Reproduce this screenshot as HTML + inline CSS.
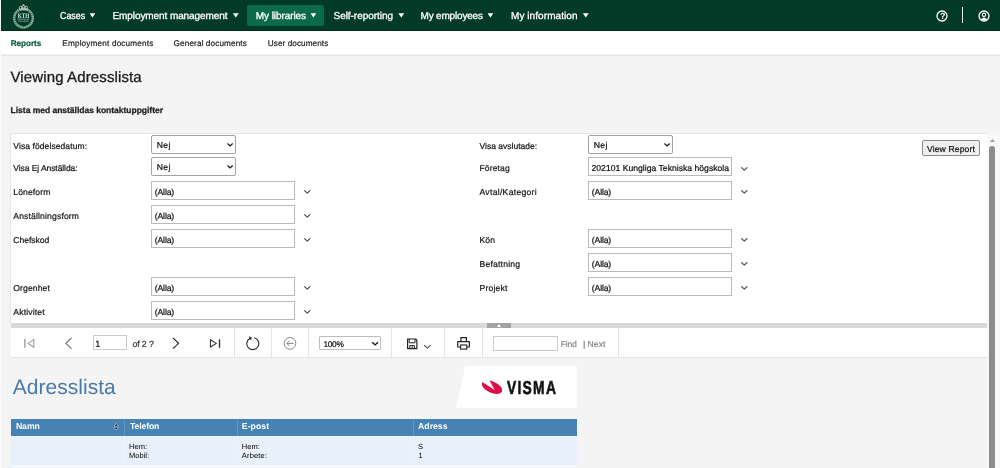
<!DOCTYPE html>
<html><head><meta charset="utf-8"><title>Viewing Adresslista</title>
<style>
*{box-sizing:border-box;margin:0;padding:0}
html,body{width:1000px;height:468px;overflow:hidden;background:#f4f4f4;font-family:"Liberation Sans","DejaVu Sans",sans-serif;color:#222;text-rendering:geometricPrecision}
.a{position:absolute}
.t{position:absolute;white-space:pre}
svg{position:absolute;overflow:visible}
#nav{position:absolute;left:0;top:0;width:1000px;height:31px;background:#013a26;border-bottom:1px solid #002c1c}
.tri{position:absolute;width:5.8px;height:4.4px;background:#fff;clip-path:polygon(0 0,100% 0,50% 100%);top:13.2px}
#sub{position:absolute;left:0;top:31px;width:1000px;height:25px;background:#fff;border-bottom:1px solid #e6e6e6;box-shadow:inset 0 -1px 0 #f0f0f0}
#panel{position:absolute;left:10px;top:133px;width:977px;height:190px;background:#fff;border-top:1px solid #e6e6e6;border-left:1px solid #e6e6e6}
.sel{position:absolute;height:19px;border:1px solid #a2a2a2;border-radius:2px;background:#fff}
.inp{position:absolute;height:19px;border:1px solid #bababa;background:#fff}
.sep{position:absolute;top:328px;width:1px;height:30px;background:#e4e4e4}
.chv{fill:none;stroke:#3a3a3a;stroke-width:1.1}
#txt{position:absolute;left:0;top:0;width:1000px;height:468px;will-change:transform}

</style></head><body>
<div id="nav">
 <div class="a" style="left:0;top:0;width:1px;height:31px;background:#f2f5f3"></div>
 <svg style="left:11px;top:2px;will-change:transform" width="25" height="28" viewBox="11 2 25 28">
  <circle cx="23.5" cy="18.1" r="9.3" fill="none" stroke="#8fb3a2" stroke-width="2.5" stroke-dasharray="1.6 0.45"/>
  <circle cx="23.5" cy="18.1" r="7.4" fill="#013a26"/>
  <circle cx="21" cy="7.9" r="1.7" fill="none" stroke="#a9c6b8" stroke-width="0.9"/>
  <circle cx="26" cy="7.9" r="1.7" fill="none" stroke="#a9c6b8" stroke-width="0.9"/>
  <circle cx="23.5" cy="7.3" r="1.8" fill="none" stroke="#b8d1c5" stroke-width="0.9"/>
  <path d="M23.5 4 V6 M22.7 4.8 H24.3" stroke="#b8d1c5" stroke-width="0.7" fill="none"/>
  <rect x="19.6" y="9.2" width="7.8" height="1.2" fill="#a9c6b8"/>
  <text x="17.4" y="20.2" font-size="1.9" font-family="Liberation Sans,sans-serif" font-weight="700" fill="#a7c4b6" textLength="12" lengthAdjust="spacingAndGlyphs">VETENSKAP</text><text x="18.1" y="22.3" font-size="1.9" font-family="Liberation Sans,sans-serif" font-weight="700" fill="#a7c4b6" textLength="10.6" lengthAdjust="spacingAndGlyphs">OCH KONST</text>
  <text x="23.5" y="17.6" font-size="6.9" font-family="Liberation Serif,serif" font-weight="700" fill="#dcebe3" text-anchor="middle" textLength="11.6" lengthAdjust="spacingAndGlyphs">KTH</text>
 </svg>
 <div class="a" style="left:247px;top:5px;width:77px;height:21px;background:#0a6a4a;border-radius:2px"></div>
 <div class="tri" style="left:89.5px"></div>
 <div class="tri" style="left:232.9px"></div>
 <div class="tri" style="left:310.5px"></div>
 <div class="tri" style="left:398.4px"></div>
 <div class="tri" style="left:487.5px"></div>
 <div class="tri" style="left:582.9px"></div>
 <svg style="left:935.9px;top:9.9px" width="12" height="12" viewBox="0 0 12 12"><circle cx="6" cy="6" r="5" fill="none" stroke="#fff" stroke-width="1.3"/></svg>
 <div class="a" style="left:962.1px;top:7px;width:1.3px;height:16px;background:#e8efec"></div>
 <svg style="left:978.3px;top:9.9px" width="12" height="12" viewBox="0 0 12 12"><circle cx="6" cy="6" r="5" fill="none" stroke="#fff" stroke-width="1.3"/><circle cx="6" cy="4.8" r="1.7" fill="none" stroke="#fff" stroke-width="1.1"/><path d="M2.6 9.4 Q6 5.6 9.4 9.4 Q6 11.6 2.6 9.4 Z" fill="#fff"/></svg>
</div>
<div id="sub"></div>
<div id="panel"></div>
<!-- scrollbar -->
<div class="a" style="left:987px;top:133px;width:13px;height:335px;background:#f8f8f8"></div>
<div class="a" style="left:989.3px;top:146px;width:5.4px;height:330px;background:#8c8c8c;border-radius:3px"></div>
<svg style="left:989.5px;top:138.5px" width="5" height="3" viewBox="0 0 5 3"><path d="M0 3 L2.5 0 L5 3 Z" fill="#a0a0a0"/></svg>
<!-- selects -->
<div class="sel" style="left:151px;top:135px;width:85px"></div>
<div class="sel" style="left:151px;top:157px;width:85px"></div>
<div class="sel" style="left:588px;top:135px;width:85px"></div>
<svg style="left:226.7px;top:143.2px" width="6.2" height="3.6" viewBox="0 0 6.2 3.6"><path d="M0.5 0.5 L3.1 3 L5.7 0.5" fill="none" stroke="#1a1a1a" stroke-width="1.25"/></svg>
<svg style="left:226.7px;top:165.4px" width="6.2" height="3.6" viewBox="0 0 6.2 3.6"><path d="M0.5 0.5 L3.1 3 L5.7 0.5" fill="none" stroke="#1a1a1a" stroke-width="1.25"/></svg>
<svg style="left:663.7px;top:143.2px" width="6.2" height="3.6" viewBox="0 0 6.2 3.6"><path d="M0.5 0.5 L3.1 3 L5.7 0.5" fill="none" stroke="#1a1a1a" stroke-width="1.25"/></svg>
<!-- inputs left -->
<div class="inp" style="left:151px;top:181px;width:144px"></div>
<div class="inp" style="left:151px;top:205px;width:144px"></div>
<div class="inp" style="left:151px;top:229px;width:144px"></div>
<div class="inp" style="left:151px;top:277px;width:144px"></div>
<div class="inp" style="left:151px;top:301px;width:144px"></div>
<!-- inputs right -->
<div class="inp" style="left:588px;top:157px;width:144px"></div>
<div class="inp" style="left:588px;top:181px;width:144px"></div>
<div class="inp" style="left:588px;top:229px;width:144px"></div>
<div class="inp" style="left:588px;top:253px;width:144px"></div>
<div class="inp" style="left:588px;top:277px;width:144px"></div>
<!-- chevrons for inputs -->
<svg class="chv" style="left:304px;top:190px" width="6.6" height="3.6" viewBox="0 0 6.6 3.6"><path d="M0.3 0.3 L3.3 3.1 L6.3 0.3"/></svg>
<svg class="chv" style="left:304px;top:214px" width="6.6" height="3.6" viewBox="0 0 6.6 3.6"><path d="M0.3 0.3 L3.3 3.1 L6.3 0.3"/></svg>
<svg class="chv" style="left:304px;top:238px" width="6.6" height="3.6" viewBox="0 0 6.6 3.6"><path d="M0.3 0.3 L3.3 3.1 L6.3 0.3"/></svg>
<svg class="chv" style="left:304px;top:286px" width="6.6" height="3.6" viewBox="0 0 6.6 3.6"><path d="M0.3 0.3 L3.3 3.1 L6.3 0.3"/></svg>
<svg class="chv" style="left:304px;top:310px" width="6.6" height="3.6" viewBox="0 0 6.6 3.6"><path d="M0.3 0.3 L3.3 3.1 L6.3 0.3"/></svg>
<svg class="chv" style="left:740.6px;top:166.5px" width="6.6" height="3.6" viewBox="0 0 6.6 3.6"><path d="M0.3 0.3 L3.3 3.1 L6.3 0.3"/></svg>
<svg class="chv" style="left:740.6px;top:190px" width="6.6" height="3.6" viewBox="0 0 6.6 3.6"><path d="M0.3 0.3 L3.3 3.1 L6.3 0.3"/></svg>
<svg class="chv" style="left:740.6px;top:238px" width="6.6" height="3.6" viewBox="0 0 6.6 3.6"><path d="M0.3 0.3 L3.3 3.1 L6.3 0.3"/></svg>
<svg class="chv" style="left:740.6px;top:262px" width="6.6" height="3.6" viewBox="0 0 6.6 3.6"><path d="M0.3 0.3 L3.3 3.1 L6.3 0.3"/></svg>
<svg class="chv" style="left:740.6px;top:286px" width="6.6" height="3.6" viewBox="0 0 6.6 3.6"><path d="M0.3 0.3 L3.3 3.1 L6.3 0.3"/></svg>
<!-- view report button -->
<div class="a" style="left:922px;top:140px;width:58px;height:16px;background:#efefef;border:1px solid #8c8c8c;border-radius:2px"></div>
<!-- splitter -->
<div class="a" style="left:10.5px;top:322.5px;width:976.5px;height:5px;background:#d9d9d9"></div>
<div class="a" style="left:487px;top:322.5px;width:23.5px;height:5px;background:#a3a3a3"></div>
<svg style="left:496.5px;top:323.5px" width="4" height="3" viewBox="0 0 4 3"><path d="M0 3 L2 0 L4 3 Z" fill="#fff"/></svg>
<!-- toolbar -->
<div class="a" style="left:10.5px;top:327.5px;width:976.5px;height:30.5px;background:#fff;border-bottom:1px solid #e4e4e4"></div>
<div class="sep" style="left:234px"></div>
<div class="sep" style="left:271.2px"></div>
<div class="sep" style="left:308.2px"></div>
<div class="sep" style="left:391px"></div>
<div class="sep" style="left:444px"></div>
<div class="sep" style="left:482px"></div>
<div class="sep" style="left:618px"></div>
<div class="a" style="left:93px;top:335px;width:34px;height:15px;background:#fff;border:1px solid #cacaca"></div>
<div class="a" style="left:319px;top:336px;width:62px;height:14px;background:#fff;border:1px solid #bdbdbd;border-radius:1px"></div>
<div class="a" style="left:493px;top:336px;width:65px;height:15px;background:#fff;border:1px solid #cacaca"></div>
<svg style="left:0;top:0" width="1000" height="468" viewBox="0 0 1000 468" fill="none" stroke-linecap="butt">
 <!-- first -->
 <path d="M24.9 339 V347.8" stroke="#a0a0a0" stroke-width="1.5"/>
 <path d="M33.8 339.6 L28.2 343.4 L33.8 347.2 Z" stroke="#9a9a9a" stroke-width="1.1"/>
 <!-- prev -->
 <path d="M71.6 337.8 L65.9 343.3 L71.6 348.8" stroke="#6e6e6e" stroke-width="1.1"/>
 <!-- next -->
 <path d="M172.9 337.9 L178.6 343.3 L172.9 348.7" stroke="#222" stroke-width="1.15"/>
 <!-- last -->
 <path d="M210.5 339.8 L216.2 343.4 L210.5 347 Z" stroke="#333" stroke-width="1.1"/>
 <path d="M219.5 339.3 V347.8" stroke="#333" stroke-width="1.4"/>
 <!-- refresh -->
 <path d="M254.15 337.75 A6 6 0 1 1 249.98 338.3" stroke="#222" stroke-width="1.05"/>
 <path d="M251.5 337.5 L249.1 336.7 L250.8 339.9 Z" fill="#222" stroke="#222" stroke-width="0.4"/>
 <!-- back -->
 <circle cx="290" cy="343.4" r="5.8" stroke="#858585" stroke-width="1"/>
 <path d="M286.8 343.4 H293.7 M289.6 340.6 L286.8 343.4 L289.6 346.2" stroke="#858585" stroke-width="1"/>
 <!-- zoom select chevron -->
 <path d="M372.2 342.2 L375.1 344.9 L378 342.2" stroke="#111" stroke-width="1.4"/>
 <!-- save -->
 <path d="M407.6 339 H415.6 L416.9 340.2 V348.6 H407.6 Z" stroke="#222" stroke-width="1.2" stroke-linejoin="round"/>
 <path d="M409.2 339 V342.8 H415 V339" stroke="#222" stroke-width="1"/>
 <path d="M409.8 348.6 V345.6 H414.4 V348.6" stroke="#222" stroke-width="1"/>
 <rect x="411.6" y="346.3" width="1.4" height="2" fill="#555" stroke="none"/>
 <path d="M424.2 345.2 L427.4 348.1 L430.6 345.2" stroke="#444" stroke-width="1.05"/>
 <!-- print -->
 <path d="M460.9 341.6 V337.6 H466.4 V341.6" stroke="#222" stroke-width="1.2"/>
 <path d="M460.5 347 H457.7 V341.7 H469.4 V347 H466.8" stroke="#222" stroke-width="1.2" stroke-linejoin="round"/>
 <rect x="460.6" y="345" width="6.2" height="4.1" stroke="#222" stroke-width="1.1"/>
</svg>
<!-- report -->
<svg style="left:456px;top:366px" width="121" height="42" viewBox="0 0 121 42"><path d="M9.4 0 H120.8 V41.8 H0 Z" fill="#fff"/>
<ellipse cx="36" cy="21.1" rx="10.9" ry="5.7" transform="rotate(24 36 21.1)" fill="#dd1048"/><path d="M22.8 13.85 L38.7 24.1 L32.5 12.7 L30 10 L22 10 Z" fill="#fff"/></svg>
<div class="a" style="left:11px;top:419px;width:566px;height:17.3px;background:#4682b4"></div>
<div class="a" style="left:11px;top:436.3px;width:566px;height:29.2px;background:#e8f1fb"></div>
<div class="a" style="left:11px;top:465.5px;width:566px;height:1.2px;background:#fff"></div>
<div class="a" style="left:11px;top:436px;width:566px;height:1px;background:#f1f6fc"></div>
<div class="a" style="left:11px;top:466.5px;width:566px;height:2px;background:#e8f1fb"></div>
<div class="a" style="left:124.3px;top:418.8px;width:1px;height:50px;background:rgba(255,255,255,.16)"></div>
<div class="a" style="left:236.8px;top:418.8px;width:1px;height:50px;background:rgba(255,255,255,.16)"></div>
<div class="a" style="left:412.8px;top:418.8px;width:1px;height:50px;background:rgba(255,255,255,.16)"></div>
<svg style="left:0;top:0" width="1000" height="468" viewBox="0 0 1000 468" fill="none">
 <!-- sort icon -->
 <path d="M113.6 426.3 L116.3 423.1 L119 426.3 Z M113.6 427.2 L116.3 430.5 L119 427.2 Z" fill="#b9c9dc" stroke="none"/>
 <path d="M115.2 425.6 L116.3 424.3 L117.4 425.6 Z M115.2 427.9 L116.3 429.2 L117.4 427.9 Z" fill="#0c1622" stroke="#0c1622" stroke-width="0.5"/>
</svg>
<div class="a" style="left:0;top:31px;width:1px;height:437px;background:#fcfcfc"></div>

<div id="txt">
<span class="t" style="left:59.80px;top:10px;font-size:10px;line-height:13px;letter-spacing:0.000px;color:#fff;transform:scaleX(0.8851);transform-origin:0 0;-webkit-text-stroke:0.3px #fff;">Cases</span>
<span class="t" style="left:112.50px;top:10px;font-size:10px;line-height:13px;letter-spacing:-0.087px;color:#fff;-webkit-text-stroke:0.3px #fff;">Employment management</span>
<span class="t" style="left:255.80px;top:10px;font-size:10px;line-height:13px;letter-spacing:-0.084px;color:#fff;-webkit-text-stroke:0.3px #fff;">My libraries</span>
<span class="t" style="left:333.50px;top:10px;font-size:10px;line-height:13px;letter-spacing:-0.041px;color:#fff;-webkit-text-stroke:0.3px #fff;">Self-reporting</span>
<span class="t" style="left:420.50px;top:10px;font-size:10px;line-height:13px;letter-spacing:-0.179px;color:#fff;-webkit-text-stroke:0.3px #fff;">My employees</span>
<span class="t" style="left:511.00px;top:10px;font-size:10px;line-height:13px;letter-spacing:0.071px;color:#fff;-webkit-text-stroke:0.3px #fff;">My information</span>
<span class="t" style="left:939.90px;top:10px;font-size:9px;line-height:12px;letter-spacing:0.000px;color:#fff;font-weight:700;">?</span>
<span class="t" style="left:10.70px;top:38px;font-size:8.2px;line-height:11px;letter-spacing:-0.056px;color:#0a5a3e;font-weight:700;-webkit-text-stroke:0.2px #0a5a3e;">Reports</span>
<span class="t" style="left:62.30px;top:38px;font-size:8.2px;line-height:11px;letter-spacing:0.167px;color:#222;-webkit-text-stroke:0.2px #222;">Employment documents</span>
<span class="t" style="left:173.60px;top:38px;font-size:8.2px;line-height:11px;letter-spacing:0.109px;color:#222;-webkit-text-stroke:0.2px #222;">General documents</span>
<span class="t" style="left:267.80px;top:38px;font-size:8.2px;line-height:11px;letter-spacing:0.067px;color:#222;-webkit-text-stroke:0.2px #222;">User documents</span>
<span class="t" style="left:10.50px;top:68px;font-size:15px;line-height:20px;letter-spacing:0.124px;color:#1a1a1a;-webkit-text-stroke:0.3px #1a1a1a;">Viewing Adresslista</span>
<span class="t" style="left:10.60px;top:105px;font-size:8.5px;line-height:11px;letter-spacing:-0.018px;color:#1c1c1c;font-weight:700;-webkit-text-stroke:0.25px #1c1c1c;">Lista med anställdas kontaktuppgifter</span>
<span class="t" style="left:13.30px;top:141px;font-size:8.5px;line-height:11px;letter-spacing:0.092px;color:#181818;-webkit-text-stroke:0.22px #181818;">Visa födelsedatum:</span>
<span class="t" style="left:13.30px;top:163px;font-size:8.5px;line-height:11px;letter-spacing:-0.072px;color:#181818;-webkit-text-stroke:0.22px #181818;">Visa Ej Anställda:</span>
<span class="t" style="left:13.30px;top:187px;font-size:8.6px;line-height:11px;letter-spacing:0.112px;color:#181818;-webkit-text-stroke:0.22px #181818;">Löneform</span>
<span class="t" style="left:13.30px;top:211px;font-size:8.6px;line-height:11px;letter-spacing:0.145px;color:#181818;-webkit-text-stroke:0.22px #181818;">Anställningsform</span>
<span class="t" style="left:13.30px;top:235px;font-size:8.6px;line-height:11px;letter-spacing:-0.059px;color:#181818;-webkit-text-stroke:0.22px #181818;">Chefskod</span>
<span class="t" style="left:13.30px;top:283px;font-size:8.6px;line-height:11px;letter-spacing:0.094px;color:#181818;-webkit-text-stroke:0.22px #181818;">Orgenhet</span>
<span class="t" style="left:13.30px;top:307px;font-size:8.6px;line-height:11px;letter-spacing:0.151px;color:#181818;-webkit-text-stroke:0.22px #181818;">Aktivitet</span>
<span class="t" style="left:479.50px;top:141px;font-size:8.5px;line-height:11px;letter-spacing:0.014px;color:#181818;-webkit-text-stroke:0.22px #181818;">Visa avslutade:</span>
<span class="t" style="left:479.50px;top:163px;font-size:8.5px;line-height:11px;letter-spacing:0.151px;color:#181818;-webkit-text-stroke:0.22px #181818;">Företag</span>
<span class="t" style="left:479.50px;top:187px;font-size:8.6px;line-height:11px;letter-spacing:0.295px;color:#181818;-webkit-text-stroke:0.22px #181818;">Avtal/Kategori</span>
<span class="t" style="left:479.50px;top:235px;font-size:8.6px;line-height:11px;letter-spacing:0.102px;color:#181818;-webkit-text-stroke:0.22px #181818;">Kön</span>
<span class="t" style="left:479.50px;top:259px;font-size:8.6px;line-height:11px;letter-spacing:0.200px;color:#181818;-webkit-text-stroke:0.22px #181818;">Befattning</span>
<span class="t" style="left:479.50px;top:283px;font-size:8.6px;line-height:11px;letter-spacing:0.208px;color:#181818;-webkit-text-stroke:0.22px #181818;">Projekt</span>
<span class="t" style="left:156.80px;top:140px;font-size:8.6px;line-height:11px;letter-spacing:0.297px;color:#111;-webkit-text-stroke:0.22px #111;">Nej</span>
<span class="t" style="left:156.80px;top:162px;font-size:8.6px;line-height:11px;letter-spacing:0.297px;color:#111;-webkit-text-stroke:0.22px #111;">Nej</span>
<span class="t" style="left:593.80px;top:140px;font-size:8.6px;line-height:11px;letter-spacing:0.297px;color:#111;-webkit-text-stroke:0.22px #111;">Nej</span>
<span class="t" style="left:154.80px;top:187px;font-size:8.6px;line-height:11px;letter-spacing:-0.133px;color:#111;-webkit-text-stroke:0.22px #111;">(Alla)</span>
<span class="t" style="left:154.80px;top:211px;font-size:8.6px;line-height:11px;letter-spacing:-0.133px;color:#111;-webkit-text-stroke:0.22px #111;">(Alla)</span>
<span class="t" style="left:154.80px;top:235px;font-size:8.6px;line-height:11px;letter-spacing:-0.133px;color:#111;-webkit-text-stroke:0.22px #111;">(Alla)</span>
<span class="t" style="left:154.80px;top:283px;font-size:8.6px;line-height:11px;letter-spacing:-0.133px;color:#111;-webkit-text-stroke:0.22px #111;">(Alla)</span>
<span class="t" style="left:154.80px;top:307px;font-size:8.6px;line-height:11px;letter-spacing:-0.133px;color:#111;-webkit-text-stroke:0.22px #111;">(Alla)</span>
<span class="t" style="left:591.80px;top:187px;font-size:8.6px;line-height:11px;letter-spacing:-0.132px;color:#111;-webkit-text-stroke:0.22px #111;">(Alla)</span>
<span class="t" style="left:591.80px;top:235px;font-size:8.6px;line-height:11px;letter-spacing:-0.132px;color:#111;-webkit-text-stroke:0.22px #111;">(Alla)</span>
<span class="t" style="left:591.80px;top:259px;font-size:8.6px;line-height:11px;letter-spacing:-0.132px;color:#111;-webkit-text-stroke:0.22px #111;">(Alla)</span>
<span class="t" style="left:591.80px;top:283px;font-size:8.6px;line-height:11px;letter-spacing:-0.132px;color:#111;-webkit-text-stroke:0.22px #111;">(Alla)</span>
<span class="t" style="left:591.50px;top:163px;font-size:8.6px;line-height:11px;letter-spacing:0.017px;color:#111;-webkit-text-stroke:0.22px #111;">202101 Kungliga Tekniska högskola</span>
<span class="t" style="left:927.00px;top:144px;font-size:8.6px;line-height:11px;letter-spacing:0.114px;color:#111;-webkit-text-stroke:0.22px #111;">View Report</span>
<span class="t" style="left:95.20px;top:338px;font-size:9px;line-height:12px;letter-spacing:0.000px;color:#111;-webkit-text-stroke:0.22px #111;">1</span>
<span class="t" style="left:132.40px;top:339px;font-size:8.8px;line-height:11px;letter-spacing:-0.123px;color:#333;-webkit-text-stroke:0.22px #333;">of 2 ?</span>
<span class="t" style="left:323.40px;top:339px;font-size:8.3px;line-height:11px;letter-spacing:-0.278px;color:#111;-webkit-text-stroke:0.22px #111;">100%</span>
<span class="t" style="left:560.80px;top:339px;font-size:8.6px;line-height:11px;letter-spacing:-0.240px;color:#8a8a8a;-webkit-text-stroke:0.22px #8a8a8a;">Find</span>
<span class="t" style="left:583.00px;top:339px;font-size:8.6px;line-height:11px;letter-spacing:0.000px;color:#333;-webkit-text-stroke:0;">|</span>
<span class="t" style="left:587.50px;top:339px;font-size:8.6px;line-height:11px;letter-spacing:0.109px;color:#8a8a8a;-webkit-text-stroke:0.22px #8a8a8a;">Next</span>
<span class="t" style="left:12.80px;top:374px;font-size:21px;line-height:27px;letter-spacing:0.030px;color:#4979a7;">Adresslista</span>
<span class="t" style="left:507.40px;top:376px;font-size:18.7px;line-height:24px;letter-spacing:1.723px;color:#111;font-weight:700;transform:scaleX(0.7400);transform-origin:0 0;-webkit-text-stroke:0.6px #111;">VISMA</span>
<span class="t" style="left:15.90px;top:421px;font-size:8.67px;line-height:11px;letter-spacing:-0.021px;color:#fff;font-weight:700;">Namn</span>
<span class="t" style="left:130.00px;top:421px;font-size:8.67px;line-height:11px;letter-spacing:-0.123px;color:#fff;font-weight:700;">Telefon</span>
<span class="t" style="left:241.80px;top:421px;font-size:8.67px;line-height:11px;letter-spacing:0.073px;color:#fff;font-weight:700;">E-post</span>
<span class="t" style="left:418.10px;top:421px;font-size:8.67px;line-height:11px;letter-spacing:0.008px;color:#fff;font-weight:700;">Adress</span>
<span class="t" style="left:129.00px;top:442px;font-size:7.5px;line-height:10px;letter-spacing:0.026px;color:#000;">Hem:</span>
<span class="t" style="left:129.00px;top:451px;font-size:7.5px;line-height:10px;letter-spacing:0.017px;color:#000;">Mobil:</span>
<span class="t" style="left:241.80px;top:442px;font-size:7.5px;line-height:10px;letter-spacing:0.026px;color:#000;">Hem:</span>
<span class="t" style="left:241.80px;top:451px;font-size:7.5px;line-height:10px;letter-spacing:0.169px;color:#000;">Arbete:</span>
<span class="t" style="left:418.00px;top:442px;font-size:7.5px;line-height:10px;letter-spacing:0.000px;color:#000;">S</span>
<span class="t" style="left:418.40px;top:451px;font-size:7.5px;line-height:10px;letter-spacing:0.000px;color:#000;">1</span>
</div>
</body></html>
